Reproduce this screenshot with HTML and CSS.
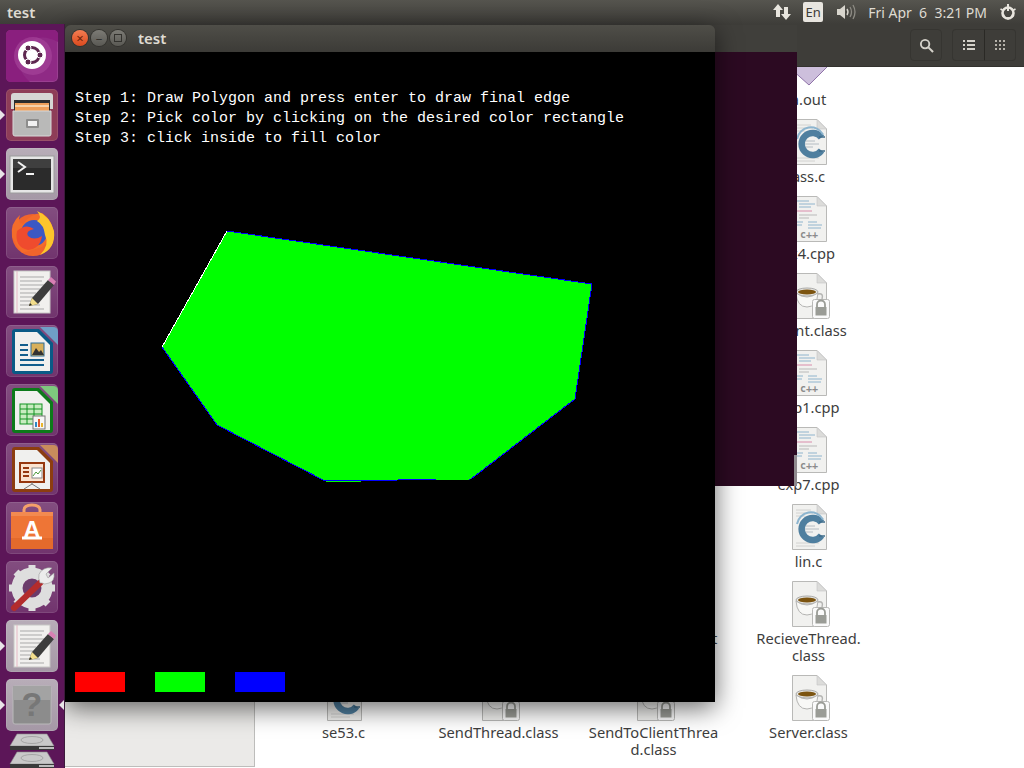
FILE: index.html
```html
<!DOCTYPE html>
<html lang="en">
<head>
    <meta charset="UTF-8">
    <title>test</title>
    <link rel="stylesheet" href="styles.css">
</head>
<body>
<svg class="defs" width="0" height="0">
    <defs>
        <symbol id="paper" viewBox="0 0 36 46">
            <path d="M1.500.5H26L35.500 10V45.500H1.500Z" fill="#f1f1ef" stroke="#b9b9b7"/>
            <path d="M26 .5V10H35.500Z" fill="#dcdcda" stroke="#c4c4c2" stroke-width=".6"/>
        </symbol>
        <symbol id="file-c" viewBox="0 0 36 46">
            <use href="#paper" width="36" height="46"/>
            <path d="M5 6H20M5 9H22M5 12H14M5 39H28M5 42H24" stroke="#d2d2d0"/>
            <path d="M13 22H24M13 25H28M13 28H22" stroke="#b4bcc2"/>
            <path d="M30.500 18.500A11 11 0 1 0 30.500 31.500" fill="none" stroke="#4f7f9f" stroke-width="6.500"/>
            <path d="M32 15.500A14 14 0 0 0 6 20" fill="none" stroke="#8db5cf" stroke-width="2"/>
            <path d="M34 18H28M34 32H28" stroke="#3f6c8a" stroke-width="1.500"/>
        </symbol>
        <symbol id="file-cpp" viewBox="0 0 36 46">
            <use href="#paper" width="36" height="46"/>
            <path d="M5 5H18M8 8H24M8 11H20" stroke="#8fb4cd"/>
            <path d="M5 15H21" stroke="#d98cab"/>
            <path d="M8 19H26M8 22H18" stroke="#b9b9b9"/>
            <path d="M5 26H12M17 26H26M17 29H31M17 32H30M5 29H11" stroke="#8fb4cd"/>
            <text x="18" y="42" class="cpp-text">c++</text>
        </symbol>
        <symbol id="file-java" viewBox="0 0 40 46">
            <use href="#paper" width="36" height="46"/>
            <ellipse cx="16" cy="19" rx="11" ry="4" fill="#e8e8e6" stroke="#a9a9a7"/>
            <ellipse cx="16" cy="19" rx="9" ry="2.600" fill="#7c5410"/>
            <path d="M5 20Q6 34 16 34Q26 34 27 20Q21 24 16 24Q10 24 5 20Z" fill="#f8f8f6" stroke="#b4b4b2"/>
            <path d="M27 21Q33 20 31 26Q29 30 25 29" fill="none" stroke="#b4b4b2" stroke-width="1.500"/>
            <rect x="21.500" y="26.500" width="17" height="19" rx="2" fill="#fafafa" stroke="#b8b8b6"/>
            <path d="M26 34V31.500A4 4 0 0 1 34 31.500V34" fill="none" stroke="#9a9c96" stroke-width="1.800"/>
            <rect x="24.500" y="34" width="11" height="8.500" fill="#9a9c96"/>
        </symbol>
        <symbol id="editor" viewBox="0 0 52 52">
            <rect x="8" y="5" width="36" height="42" fill="#f1f0ee" stroke="#c7c7c5"/>
            <path d="M11 5V47" stroke="#e6b8c4"/>
            <path d="M14 11H38M14 15H36M14 19H39M14 23H34M14 27H30M14 31H27M14 35H25M14 39H34M14 43H38" stroke="#a9a9a9"/>
            <path d="M23 40L26 32L42 14L48 19L32 38Z" fill="#3d3d3d"/>
            <path d="M42 14L45 11L50 15.500L48 19Z" fill="#d77fb3"/>
            <path d="M23 40L26 32L32 38Z" fill="#f2dd8b"/>
            <path d="M23 40L24 37L26 39Z" fill="#222"/>
        </symbol>
        <symbol id="disk" viewBox="0 0 46 18">
            <path d="M8 1H38L45 13H1Z" fill="#c9c9c9" stroke="#8a8a8a" stroke-width=".6"/>
            <ellipse cx="23" cy="7" rx="11" ry="3.500" fill="none" stroke="#a5a5a5"/>
            <rect x="1" y="13" width="44" height="4" fill="#3a3a3a"/>
            <rect x="30" y="14" width="15" height="2" fill="#bcbcbc"/>
        </symbol>
    </defs>
</svg>

<div class="desktop">
    <header class="panel">
        <span class="panel-title">test</span>
        <div class="panel-right">
            <svg class="panel-icon" width="18" height="20" viewBox="0 0 18 20"><path d="M5 2L10 8H7V15H3V8H0ZM13 18L18 12H15V5H11V12H8Z" fill="#e8e5de"/></svg>
            <span class="lang">En</span>
            <svg class="panel-icon" width="20" height="18" viewBox="0 0 20 18"><path d="M1 6H4L9 2V16L4 12H1Z" fill="#d8d5cd"/><path d="M11 6Q13 9 11 12" fill="none" stroke="#d8d5cd" stroke-width="1.400"/><path d="M14 4Q17 9 14 14M17 2Q21 9 17 16" fill="none" stroke="#8d8b84" stroke-width="1.300"/></svg>
            <span class="clock">Fri Apr &nbsp;6 &nbsp;3:21 PM</span>
            <svg class="panel-icon" width="16" height="18" viewBox="0 0 16 18"><circle cx="8" cy="10" r="5.500" fill="none" stroke="#e8e5de" stroke-width="2.600"/><path d="M8 1V8" stroke="#e8e5de" stroke-width="2"/><path d="M8 1.500V17.500M.5 6L15.500 14M15.500 6L.5 14" stroke="#e8e5de" stroke-width="1.600" stroke-dasharray="2.500 10"/></svg>
        </div>
    </header>

    <nav class="launcher">
        <div class="tile tile-home">
            <svg width="52" height="52" viewBox="0 0 52 52">
                <path d="M52 12Q30 0 14 20Q8 38 24 52H5Q0 52 0 47V5Q0 0 5 0H47Q52 0 52 5Z" fill="#8a1f7e"/>
                <circle cx="27" cy="26" r="19" fill="#a8479c" opacity=".6"/>
                <circle cx="26" cy="25" r="14" fill="#fff"/>
                <circle cx="26" cy="25" r="7.500" fill="none" stroke="#5e2750" stroke-width="3"/>
                <circle cx="34" cy="25" r="3" fill="#5e2750" stroke="#fff"/>
                <circle cx="22" cy="18" r="3" fill="#5e2750" stroke="#fff"/>
                <circle cx="22" cy="32" r="3" fill="#5e2750" stroke="#fff"/>
            </svg>
        </div>
        <div class="tile tile-files has-window">
            <svg width="52" height="52" viewBox="0 0 52 52">
                <path d="M5 7Q5 4 8 4H44Q47 4 47 7V20H5Z" fill="#d6d6d5"/>
                <rect x="8" y="11" width="36" height="14" fill="#2d2d2d"/>
                <rect x="9" y="14" width="34" height="8" fill="#f0a05a"/>
                <path d="M9 17H43" stroke="#fbe3c4" stroke-width="1.500"/>
                <path d="M7 22H45V45Q45 47 43 47H9Q7 47 7 45Z" fill="#b9b9b8" stroke="#d8d8d8"/>
                <rect x="20" y="30" width="13" height="9" rx="1" fill="#8d8d8c"/>
                <rect x="22" y="32" width="9" height="5" fill="#f1f1f1"/>
            </svg>
        </div>
        <div class="tile tile-active has-window">
            <svg width="52" height="52" viewBox="0 0 52 52">
                <rect x="4" y="8" width="44" height="37" fill="#e6e6e6" stroke="#9c9c9c"/>
                <rect x="7" y="11" width="38" height="31" fill="#2b2b2b"/>
                <rect x="7" y="11" width="38" height="9" fill="#3f3f3f"/>
                <path d="M12 14L19 19L12 24" fill="none" stroke="#f2f2f2" stroke-width="2"/>
                <path d="M20 26H28" stroke="#f2f2f2" stroke-width="2"/>
            </svg>
        </div>
        <div class="tile">
            <svg width="52" height="52" viewBox="0 0 52 52">
                <circle cx="27" cy="28" r="21" fill="#f0642c"/>
                <path d="M6 30Q4 16 14 8Q11 16 17 17Q24 7 36 6Q46 12 48 28L36 40L16 46Z" fill="#f46c2a"/>
                <circle cx="28" cy="26" r="13" fill="#3b58c4"/>
                <path d="M31 4Q44 9 48 24Q50 42 34 48Q44 38 39 28Q38 18 31 14Q37 11 31 4Z" fill="#fcc52c"/>
                <path d="M11 24Q20 16 28 22Q19 24 22 29Q28 34 36 29Q34 42 22 43Q8 40 11 24Z" fill="#ef4b2e"/>
            </svg>
        </div>
        <div class="tile">
            <svg width="52" height="52"><use href="#editor"/></svg>
        </div>
        <div class="tile">
            <svg width="52" height="52" viewBox="0 0 52 52">
                <path d="M34 2H47Q52 2 52 7V20Z" fill="#6f9fc6"/>
                <path d="M9 4H33L47 18V46Q47 49 44 49H9Q6 49 6 46V7Q6 4 9 4Z" fill="#0a5a86"/>
                <path d="M9 7H31L44 20V46H9Z" fill="#f0f0ee"/>
                <path d="M14 20H22M14 25H22M14 30H22M14 35H38M14 40H38" stroke="#125e8d" stroke-width="2"/>
                <rect x="25" y="18" width="13" height="13" fill="#d8b05a" stroke="#2b6d98"/>
                <path d="M26 30L30 23L33 27L35 25L38 30Z" fill="#333"/>
            </svg>
        </div>
        <div class="tile">
            <svg width="52" height="52" viewBox="0 0 52 52">
                <path d="M34 2H47Q52 2 52 7V20Z" fill="#7ec87e"/>
                <path d="M9 4H33L47 18V46Q47 49 44 49H9Q6 49 6 46V7Q6 4 9 4Z" fill="#0d7a1a"/>
                <path d="M9 7H31L44 20V46H9Z" fill="#f0f0ee"/>
                <rect x="14" y="20" width="22" height="20" fill="#c8ecc0" stroke="#139322"/>
                <path d="M14 25H36M14 30H36M14 35H36M21 20V40M28 20V40" stroke="#139322"/>
                <rect x="27" y="32" width="12" height="13" fill="#f6f6f6" stroke="#777"/>
                <path d="M30 43V38" stroke="#2f86c5" stroke-width="2"/><path d="M33 43V35" stroke="#e2562e" stroke-width="2"/><path d="M36 43V39" stroke="#e9b52c" stroke-width="2"/>
            </svg>
        </div>
        <div class="tile">
            <svg width="52" height="52" viewBox="0 0 52 52">
                <path d="M34 2H47Q52 2 52 7V20Z" fill="#c98c5c"/>
                <path d="M9 4H33L47 18V46Q47 49 44 49H9Q6 49 6 46V7Q6 4 9 4Z" fill="#8c3d10"/>
                <path d="M9 7H31L44 20V46H9Z" fill="#f0f0ee"/>
                <rect x="14" y="20" width="24" height="19" fill="#fbe3cf" stroke="#96380f" stroke-width="2"/>
                <path d="M17 25H23M17 29H23M17 33H23" stroke="#96380f" stroke-width="2"/>
                <rect x="26" y="25" width="10" height="10" fill="#fff" stroke="#888"/>
                <path d="M27 33L30 29L32 31L35 27" fill="none" stroke="#4c9a3a"/>
                <path d="M26 39V41L18 46M26 41L34 46" fill="none" stroke="#777"/>
            </svg>
        </div>
        <div class="tile">
            <svg width="52" height="52" viewBox="0 0 52 52">
                <path d="M18 12V8Q18 3 26 3Q34 3 34 8V12" fill="none" stroke="#f4a06a" stroke-width="3"/>
                <path d="M5 10H47V46Q47 47 46 47H6Q5 47 5 46Z" fill="#ee7536"/>
                <path d="M5 10H47V14H5Z" fill="#f28a50"/>
                <rect x="5" y="36" width="42" height="11" fill="#e46a2c"/>
                <text x="26" y="36" class="bag-letter">A</text>
                <path d="M16 36H36" stroke="#fff" stroke-width="3"/>
            </svg>
        </div>
        <div class="tile">
            <svg width="52" height="52" viewBox="0 0 52 52">
                <circle cx="26" cy="27" r="15" fill="none" stroke="#dedede" stroke-width="11"/>
                <path d="M26 4V50M3 27H49M10 11L42 43M42 11L10 43" stroke="#dedede" stroke-width="7" stroke-dasharray="8 30"/>
                <circle cx="26" cy="27" r="9" fill="#6a3b6a"/>
                <path d="M8 47L36 20" stroke="#b32c2c" stroke-width="6" stroke-linecap="round"/>
                <path d="M34 22Q30 12 38 8Q42 6 46 7L40 13L42 17L48 12Q49 20 43 22Q38 24 36 22Z" fill="#ececec" stroke="#999" stroke-width=".6"/>
            </svg>
        </div>
        <div class="tile tile-active has-window">
            <svg width="52" height="52"><use href="#editor"/></svg>
        </div>
        <div class="tile tile-active has-window is-focused">
            <svg width="52" height="52" viewBox="0 0 52 52">
                <rect x="7" y="7" width="38" height="38" rx="2" fill="#8c8c8c" stroke="#b9b9b9"/>
                <rect x="7" y="7" width="38" height="14" fill="#a3a3a3"/>
                <text x="26" y="37" class="help-mark">?</text>
            </svg>
        </div>
        <div class="tile-stack">
            <svg class="stack-disk" width="46" height="18"><use href="#disk"/></svg>
            <svg class="stack-disk" width="46" height="18"><use href="#disk"/></svg>
        </div>
    </nav>

    <section class="files-window">
        <div class="toolbar">
            <button class="tool-btn">
                <svg width="15" height="15" viewBox="0 0 16 16"><circle cx="6.500" cy="6.500" r="4.500" fill="none" stroke="#d5d2ca" stroke-width="2"/><path d="M10 10L15 15" stroke="#d5d2ca" stroke-width="2.200"/></svg>
            </button>
            <div class="tool-group">
                <button class="tool-btn">
                    <svg width="12" height="10" viewBox="0 0 12 10"><path d="M0 1H2M4 1H12M0 5H2M4 5H12M0 9H2M4 9H12" stroke="#d5d2ca" stroke-width="2"/></svg>
                </button>
                <button class="tool-btn">
                    <svg width="10" height="10" viewBox="0 0 10 10"><path d="M0 1H10M0 5H10M0 9H10" stroke="#b5b2aa" stroke-width="2" stroke-dasharray="2 2"/></svg>
                </button>
            </div>
        </div>
        <div class="files-body">
            <aside class="sidebar"></aside>
            <div class="file-scroll">
                <div class="file-grid">
                    <div class="file last-col">
                        <svg class="file-icon" width="36" height="46" viewBox="0 0 36 46"><path d="M-10 18L18 43L36 25V0H-10Z" fill="#cdbfdc" stroke="#8f73a8"/></svg>
                        <span>a.out</span>
                    </div>
                    <div class="file last-col"><svg class="file-icon" width="36" height="46"><use href="#file-c"/></svg><span>ass.c</span></div>
                    <div class="file last-col"><svg class="file-icon" width="36" height="46"><use href="#file-cpp"/></svg><span>ex4.cpp</span></div>
                    <div class="file last-col"><svg class="file-icon" width="36" height="46"><use href="#file-java" width="40" height="46"/></svg><span>Client.class</span></div>
                    <div class="file last-col"><svg class="file-icon" width="36" height="46"><use href="#file-cpp"/></svg><span>exp1.cpp</span></div>
                    <div class="file last-col"><svg class="file-icon" width="36" height="46"><use href="#file-cpp"/></svg><span>exp7.cpp</span></div>
                    <div class="file last-col"><svg class="file-icon" width="36" height="46"><use href="#file-c"/></svg><span>lin.c</span></div>
                    <div class="file third-col"><svg class="file-icon" width="36" height="46"><use href="#file-java" width="40" height="46"/></svg><span>ReceiveFromClient</span></div>
                    <div class="file last-col"><svg class="file-icon" width="36" height="46"><use href="#file-java" width="40" height="46"/></svg><span>RecieveThread.<br>class</span></div>
                    <div class="file"><svg class="file-icon" width="36" height="46"><use href="#file-c"/></svg><span>se53.c</span></div>
                    <div class="file"><svg class="file-icon" width="36" height="46"><use href="#file-java" width="40" height="46"/></svg><span>SendThread.class</span></div>
                    <div class="file"><svg class="file-icon" width="36" height="46"><use href="#file-java" width="40" height="46"/></svg><span>SendToClientThrea<br>d.class</span></div>
                    <div class="file"><svg class="file-icon" width="36" height="46"><use href="#file-java" width="40" height="46"/></svg><span>Server.class</span></div>
                </div>
            </div>
        </div>
    </section>

    <section class="window terminal-window">
        <div class="titlebar terminal-title"></div>
        <div class="terminal-body"><div class="term-scroll"></div></div>
    </section>

    <section class="window test-window">
        <div class="titlebar">
            <span class="win-btn win-close">×</span>
            <span class="win-btn">–</span>
            <span class="win-btn"><i class="max-mark"></i></span>
            <span class="win-title">test</span>
        </div>
        <div class="canvas">
            <svg class="drawing" width="650" height="650" viewBox="65 52 650 650" shape-rendering="crispEdges">
                <polygon points="162,347 227,231 592,284 575,399 471,479 325,481 217,425" fill="#0f0" stroke="#00f"/>
                <line x1="162" y1="347" x2="227" y2="231" stroke="#fff"/>
                <line x1="326" y1="481" x2="361" y2="481" stroke="#0f0"/>
                <line x1="436" y1="480" x2="470" y2="479" stroke="#0f0"/>
            </svg>
            <div class="steps">
                <div>Step 1: Draw Polygon and press enter to draw final edge</div>
                <div>Step 2: Pick color by clicking on the desired color rectangle</div>
                <div>Step 3: click inside to fill color</div>
            </div>
            <div class="swatches">
                <div class="swatch swatch-red"></div>
                <div class="swatch swatch-green"></div>
                <div class="swatch swatch-blue"></div>
            </div>
        </div>
    </section>
</div>
</body>
</html>
```
FILE: styles.css
```css
html, body {
    margin: 0;
    padding: 0;
    overflow: hidden;
}

.defs {
    position: absolute;
}

.desktop {
    position: relative;
    width: 1024px;
    height: 768px;
    overflow: hidden;
    font-family: "Noto Sans", "Open Sans", sans-serif;
    background: #f2f1f0;
}

.cpp-text {
    font: bold 10px "DejaVu Sans Mono", monospace;
    fill: #8b8b8b;
    text-anchor: middle;
}

.bag-letter {
    font: bold 24px "Liberation Sans", sans-serif;
    fill: #fff;
    text-anchor: middle;
}

.help-mark {
    font: bold 34px "Liberation Sans", sans-serif;
    fill: #777;
    text-anchor: middle;
}

/* top bar */
.panel {
    display: flex;
    justify-content: space-between;
    align-items: center;
    height: 24px;
    padding: 0 8px 0 7px;
    background: linear-gradient(#56554f, #3e3d39);
    color: #dfdbd2;
    font-size: 15px;
}

.panel-title {
    font-weight: 600;
}

.panel-right {
    display: flex;
    align-items: center;
}

.panel-icon {
    display: block;
}

.lang {
    width: 20px;
    height: 20px;
    margin: 0 13px 0 12px;
    border-radius: 2px;
    background: #e8e5df;
    color: #3c3b37;
    font-size: 13px;
    line-height: 20px;
    text-align: center;
}

.clock {
    margin: 0 13px 0 12px;
    white-space: nowrap;
    font-size: 14px;
}

/* launcher */
.launcher {
    position: absolute;
    left: 0;
    top: 24px;
    bottom: 0;
    z-index: 3;
    display: flex;
    flex-direction: column;
    align-items: center;
    gap: 7px;
    width: 64px;
    padding-top: 6px;
    background: #5c1658;
    border-right: 1px solid #3d1a3c;
    overflow: hidden;
}

.tile {
    position: relative;
    flex: none;
    width: 52px;
    height: 52px;
    border-radius: 5px;
    background: linear-gradient(rgba(255, 255, 255, .24), rgba(255, 255, 255, .13));
    box-shadow: inset 0 0 0 1px rgba(255, 255, 255, .1);
}

.tile svg {
    display: block;
}

.tile-home {
    background: #8f2a85;
}

.tile-files {
    background: #8e3d58;
}

.tile-active {
    background: linear-gradient(#b8adb8, #a598a6);
}

.has-window::before {
    content: "";
    position: absolute;
    left: -6px;
    top: 21px;
    border: 5px solid transparent;
    border-left-color: #e8e4e8;
}

.is-focused::after {
    content: "";
    position: absolute;
    right: -6px;
    top: 21px;
    border: 5px solid transparent;
    border-right-color: #e8e4e8;
}

.tile-stack {
    flex: none;
    margin-top: -5px;
}

.stack-disk {
    display: block;
}

/* files window behind */
.files-window {
    position: absolute;
    left: 65px;
    right: 0;
    top: 24px;
    bottom: 0;
    display: flex;
    flex-direction: column;
    background: #fff;
}

.toolbar {
    flex: none;
    display: flex;
    justify-content: flex-end;
    align-items: flex-start;
    gap: 10px;
    height: 43px;
    box-sizing: border-box;
    padding: 5px 8px 0 0;
    background: #3e3d39;
    border-bottom: 1px solid #33322e;
}

.tool-btn {
    display: flex;
    align-items: center;
    justify-content: center;
    width: 32px;
    height: 32px;
    padding: 0;
    background: transparent;
    border: 1px solid #363531;
    border-radius: 4px;
}

.tool-group {
    display: flex;
}

.tool-group .tool-btn:first-child {
    border-radius: 4px 0 0 4px;
    border-right: 0;
}

.tool-group .tool-btn:last-child {
    border-radius: 0 4px 4px 0;
    border-left: 1px solid #2a2925;
}

.files-body {
    flex: 1;
    display: flex;
    min-height: 0;
}

.sidebar {
    flex: none;
    width: 189px;
    margin-bottom: 1px;
    background: #ebeae8;
    border-right: 1px solid #bdbdbb;
    border-bottom: 1px solid #bdbdbb;
}

.file-scroll {
    flex: 1;
    margin-left: 6px;
    background: #fff;
    overflow: hidden;
}

.file-grid {
    display: grid;
    grid-template-columns: repeat(4, 155px);
    margin: -25px 0 0 5px;
}

.file {
    display: flex;
    flex-direction: column;
    align-items: center;
    padding-bottom: 11px;
    color: #3d3d3d;
    font-size: 14.67px;
    line-height: 17px;
    text-align: center;
    white-space: nowrap;
}

.file span {
    margin-top: 3px;
}

.file-icon {
    display: block;
    overflow: visible;
}

.last-col {
    grid-column: 4;
}

.third-col {
    grid-column: 3;
}

/* windows */
.window {
    position: absolute;
    border-radius: 6px 6px 0 0;
}

.titlebar {
    display: flex;
    align-items: center;
    height: 27px;
    box-sizing: border-box;
    padding: 0 0 1px 7px;
    border-radius: 6px 6px 0 0;
    background: linear-gradient(#4f4e48, #3c3b37);
}

.terminal-window {
    left: 500px;
    top: 25px;
    width: 297px;
    z-index: 1;
}

.terminal-title {
    border-radius: 0;
    background: #403f3b;
}

.terminal-body {
    position: relative;
    height: 434px;
    background: #2c0a22;
}

.term-scroll {
    position: absolute;
    right: 0;
    bottom: 0;
    width: 3px;
    height: 31px;
    background: #8f8a8e;
}

.test-window {
    left: 65px;
    top: 25px;
    width: 650px;
    z-index: 2;
    box-shadow: 0 6px 26px rgba(0, 0, 0, .6);
}

.win-btn {
    display: flex;
    align-items: center;
    justify-content: center;
    width: 16px;
    height: 16px;
    margin-right: 3px;
    border-radius: 50%;
    background: linear-gradient(#7c7b75, #5a5954);
    box-shadow: 0 0 0 1px #33322e;
    color: #33322e;
    font-size: 13px;
    line-height: 16px;
}

.win-close {
    background: linear-gradient(#f37d52, #dc4a1e);
    color: #6b2208;
}

.max-mark {
    display: block;
    width: 6px;
    height: 6px;
    border: 1.5px solid #33322e;
}

.win-title {
    margin-left: 9px;
    color: #dfdbd2;
    font-size: 15px;
    font-weight: 600;
}

.canvas {
    position: relative;
    display: flex;
    flex-direction: column;
    justify-content: space-between;
    height: 650px;
    box-sizing: border-box;
    padding: 35px 0 10px 10px;
    background: #000;
}

.drawing {
    position: absolute;
    left: 0;
    top: 0;
}

.steps {
    position: relative;
    top: 2px;
    color: #fff;
    font-family: "Liberation Mono", monospace;
    font-size: 15px;
    line-height: 20px;
    white-space: nowrap;
}

.swatches {
    position: relative;
    display: flex;
    gap: 30px;
}

.swatch {
    width: 50px;
    height: 20px;
}

.swatch-red {
    background: #f00;
}

.swatch-green {
    background: #0f0;
}

.swatch-blue {
    background: #00f;
}
```
